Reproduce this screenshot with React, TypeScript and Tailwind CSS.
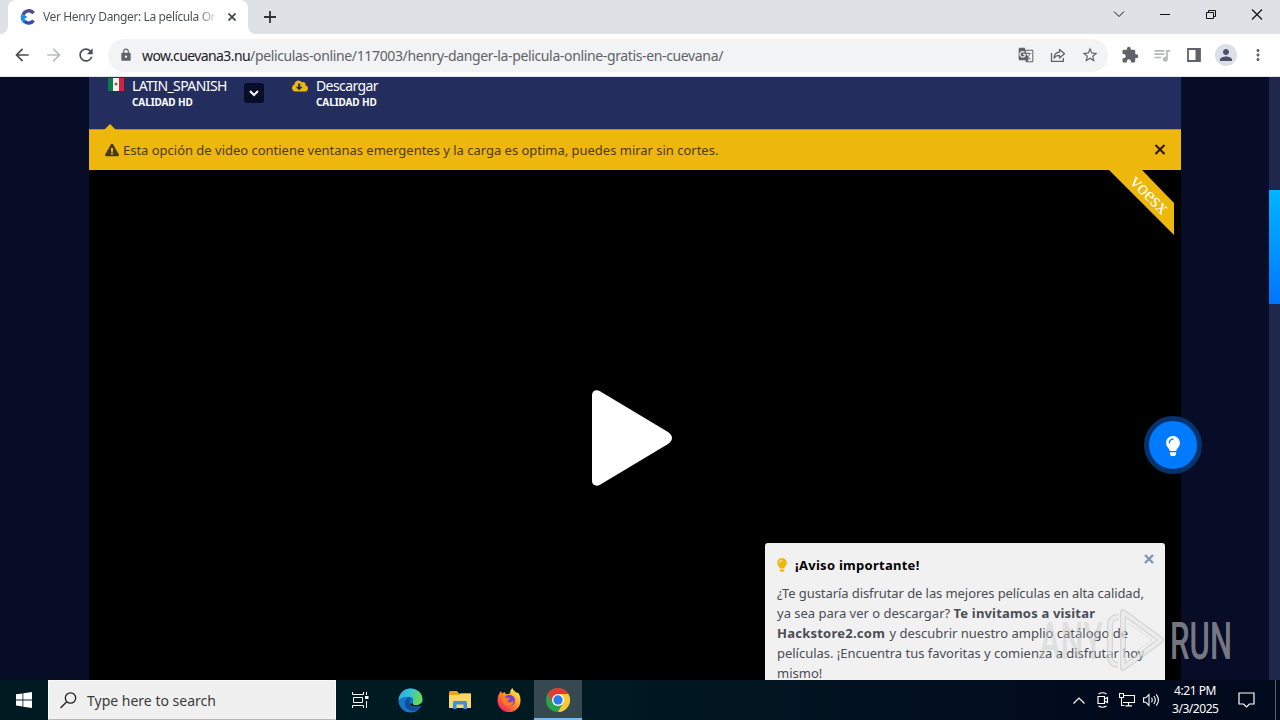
import type { ReactNode } from 'react';
import {
  FaCloudDownloadAlt,
  FaExclamationTriangle,
  FaLightbulb,
} from 'react-icons/fa';
import {
  MdArrowBack,
  MdArrowForward,
  MdExtension,
  MdGTranslate,
  MdLock,
  MdMoreVert,
  MdPerson,
  MdQueueMusic,
  MdRefresh,
  MdStarBorder,
} from 'react-icons/md';

export default function App() {
  return (
    <div className="flex h-[720px] w-[1280px] flex-col overflow-hidden bg-[#070d27] font-['Noto_Sans','Open_Sans',sans-serif]">
      <TabStrip />
      <Toolbar />
      <Page />
      <Taskbar />
    </div>
  );
}

function TabStrip() {
  return (
    <div className="flex h-[34px] shrink-0 items-stretch justify-between bg-[#dee1e6]">
      <div className="flex">
        <svg width="8" height="34" className="shrink-0">
          <path d="M8 26a8 8 0 0 1-8 8h8z" fill="#fff" />
        </svg>
        <div className="flex w-[240px] items-center rounded-t-lg bg-white pl-3 pr-2.5">
          <SiteLogo />
          <span className="ml-[7px] w-[171px] overflow-hidden whitespace-nowrap bg-linear-to-r from-[#4a4d51] from-90% to-[#4a4d51]/20 bg-clip-text text-[12px] tracking-[-0.38px] text-transparent">
            Ver Henry Danger: La película Online
          </span>
          <svg width="8" height="8" viewBox="0 0 8 8" className="ml-3.5" stroke="#3c4043" strokeWidth="1.6">
            <path d="M.5.5l7 7M7.5.5l-7 7" />
          </svg>
        </div>
        <svg width="8" height="34" className="shrink-0">
          <path d="M0 26a8 8 0 0 0 8 8H0z" fill="#fff" />
        </svg>
        <svg width="12" height="12" viewBox="0 0 12 12" className="ml-2 mt-[11px]" stroke="#303236" strokeWidth="1.8">
          <path d="M6 0v12M0 6h12" />
        </svg>
      </div>
      <svg width="170" height="28" fill="none" stroke="#111">
        <path d="M4 11.500l5 5 5-5" />
        <path d="M50 14.500h10" />
        <path d="M96.500 12.500h7v6h-7zM98.500 12.500v-2h7v6h-2" />
        <path d="M142 9.500l10 10M152 9.500l-10 10" strokeWidth="1.2" />
      </svg>
    </div>
  );
}

function SiteLogo() {
  return (
    <svg width="16" height="16" viewBox="0 0 16 16" fill="none" className="shrink-0">
      <path d="M13.500 4.200A5.800 5.800 0 0 0 3.200 6" stroke="#4a4f8c" strokeWidth="3.400" />
      <path d="M3 6a5.800 5.800 0 0 0 2 7" stroke="#1a8cf0" strokeWidth="3.400" />
      <path d="M4.500 12.300a5.800 5.800 0 0 0 9-.8" stroke="#2f4fb0" strokeWidth="3.400" />
      <path d="M4 6l3.500 2L4 10z" fill="#1a8cf0" />
    </svg>
  );
}

function Toolbar() {
  return (
    <div className="flex h-[43px] shrink-0 items-center border-b border-[#e3e5e9] bg-white pl-3 text-[#5f6368]">
      <MdArrowBack size={20} className="text-[#4a4d51]" />
      <MdArrowForward size={20} className="ml-3 text-[#babcbe]" />
      <MdRefresh size={20} className="ml-3 text-[#4a4d51]" />
      <div className="ml-3 flex h-[33px] w-[1000px] items-center rounded-full bg-[#f1f3f4] pl-[11px] pr-[9px]">
        <MdLock size={14} />
        <span className="ml-[9px] grow whitespace-nowrap text-[14px] tracking-[-0.36px]">
          <span className="tracking-[-0.59px] text-[#202124]">wow.cuevana3.nu</span>
          /peliculas-online/117003/henry-danger-la-pelicula-online-gratis-en-cuevana/
        </span>
        <MdGTranslate size={16} />
        <svg width="16" height="16" viewBox="0 0 16 16" className="ml-4" fill="none" stroke="currentColor" strokeWidth="1.300">
          <path d="M1.500 6v8.300h11.800V11" />
          <path d="M9.500 2.500v2.600C6 5.300 4.300 7.600 4 11c1.500-2 3.200-2.700 5.500-2.700V11l5-4.300z" strokeLinejoin="round" />
        </svg>
        <MdStarBorder size={18} className="ml-[15px]" />
      </div>
      <MdExtension size={18} className="ml-[13px]" />
      <MdQueueMusic size={20} className="ml-[13px] text-[#b4b6b9]" />
      <svg width="14" height="14" viewBox="0 0 14 14" className="ml-[15px]">
        <path d="M1 1h12v12H1z" fill="none" stroke="currentColor" strokeWidth="1.800" />
        <path d="M8.500 1H13v12H8.500z" fill="currentColor" />
      </svg>
      <div className="ml-3.5 flex size-[22px] items-center justify-center rounded-full bg-[#dcdfe8]">
        <MdPerson size={18} className="text-[#4b5168]" />
      </div>
      <MdMoreVert size={18} className="ml-3" />
    </div>
  );
}

function Page() {
  return (
    <main className="relative flex h-[603px] shrink-0 justify-between overflow-hidden pl-[89px]">
      <div className="flex w-[1092px] flex-col">
        <ServerTabs />
        <div className="relative flex h-[41px] shrink-0 items-center border-t border-[#b8912a] bg-[#edb70b] pl-4 pr-[15px] text-[#4e3b0a]">
          <svg width="12" height="6" className="absolute -top-1.5 left-[15px]">
            <path d="M0 6l6-6 6 6z" fill="#edb70b" />
          </svg>
          <FaExclamationTriangle size={14} className="text-[#463a1a]" />
          <span className="ml-1 mt-0.5 grow whitespace-nowrap text-[13px] tracking-[-0.015px]">
            Esta opción de video contiene ventanas emergentes y la carga es optima, puedes mirar sin cortes.
          </span>
          <svg width="12" height="12" viewBox="0 0 12 12" stroke="#2b1503" strokeWidth="2">
            <path d="M1.500 1l9 9M10.500 1l-9 9" />
          </svg>
        </div>
        <Player />
      </div>
      <div className="flex w-[11px] flex-col bg-[#1f274c] pt-[113px]">
        <div className="h-[114px] bg-linear-to-b from-[#00b4ff] to-[#0075ff]" />
      </div>

      <div className="absolute left-[1144px] top-[339px] flex size-[58px] items-center justify-center rounded-full border-5 border-[#05336d] bg-[#007bff] pt-0.5 text-white">
        <FaLightbulb size={20} />
      </div>
      <NoticePanel />
      <Watermark />
    </main>
  );
}

function ServerTabs() {
  return (
    <div className="flex h-[52px] shrink-0 bg-[#232e5e] pl-[19px] text-white">
      <svg width="16" height="13" className="mt-px">
        <path d="M0 0h5v13H0z" fill="#0c7a4f" />
        <path d="M5 0h6v13H5z" fill="#f2f2f2" />
        <path d="M11 0h5v13h-5z" fill="#d0243d" />
        <circle cx="8" cy="6" r="1.600" fill="#8b6a3a" />
      </svg>
      <ServerLabel name="LATIN_SPANISH" />
      <div className="ml-[17px] mt-1.5 flex size-5 items-center justify-center rounded-[3px] bg-[#080e28]">
        <svg width="10" height="7" viewBox="0 0 10 7" fill="none" stroke="#fff" strokeWidth="2">
          <path d="M1 1l4 4 4-4" />
        </svg>
      </div>
      <FaCloudDownloadAlt size={16} className="ml-7 mt-px text-[#edb70b]" />
      <ServerLabel name="Descargar" />
    </div>
  );
}

function ServerLabel({ name }: { name: string }) {
  return (
    <div className="ml-2 w-[95px] whitespace-nowrap">
      <p className="text-[14px] leading-[18px] tracking-[-0.6px]">{name}</p>
      <p className="text-[10px] font-bold leading-[14px] tracking-[-0.1px]">CALIDAD HD</p>
    </div>
  );
}

function Player() {
  return (
    <div className="relative flex grow justify-center bg-black pr-1.5 pt-[220px]">
      <svg width="80" height="96" viewBox="0 0 80 96">
        <path d="M0 5C0 1 4 -1 8 1.200L76 42q8 6 0 12L8 94.800C4 97 0 95 0 91z" fill="#fff" />
      </svg>
      <div className="absolute right-[7px] top-0 flex size-[65px] items-center justify-center">
        <svg width="65" height="65" className="absolute inset-0">
          <path d="M0 0h33l32 33v32z" fill="#edb70b" />
        </svg>
        <span className="relative -top-[9px] left-[9px] rotate-45 font-['Liberation_Serif',serif] text-[20px] leading-none text-white">
          voesx
        </span>
      </div>
    </div>
  );
}

function NoticePanel() {
  return (
    <aside className="absolute left-[765px] top-[466px] h-[160px] w-[400px] rounded-t-[3px] bg-[#f1f1f1] px-3 pt-3 text-[#4a4d55]">
      <div className="flex h-5 items-center">
        <FaLightbulb size={14} className="-ml-0.5 text-[#edb70b]" />
        <h2 className="ml-1.5 mt-0.5 whitespace-nowrap text-[13px] font-bold tracking-[0.27px] text-black">
          ¡Aviso importante!
        </h2>
      </div>
      <p className="mt-2 whitespace-nowrap text-[13px] leading-5">
        <span className="tracking-[-0.08px]">¿Te gustaría disfrutar de las mejores películas en alta calidad,</span>
        <br />
        ya sea para ver o descargar? <b className="tracking-[0.18px]">Te invitamos a visitar</b>
        <br />
        <b className="tracking-[0.24px]">Hackstore2.com</b> <span className="ml-px">y descubrir nuestro amplio catálogo de</span>
        <br />
        <span className="tracking-[-0.02px]">películas. ¡Encuentra tus favoritas y comienza a disfrutar hoy</span>
        <br />
        mismo!
      </p>
      <svg width="10" height="10" viewBox="0 0 10 10" className="absolute right-[11px] top-[11px]" stroke="#8095b0" strokeWidth="2.400">
        <path d="M1 1l8 8M9 1l-8 8" />
      </svg>
    </aside>
  );
}

function Watermark() {
  return (
    <svg width="204" height="70" className="absolute left-[1036px] top-[528px] font-['Roboto',sans-serif] font-medium" fill="none">
      <text x="3" y="54" fontSize="51" textLength="64" lengthAdjust="spacingAndGlyphs" fill="#c8c8c8" fillOpacity=".45">
        ANY
      </text>
      <g strokeLinejoin="round">
        <path d="M83 12q-9 0-9 8v32q0 7 8 8M87 7l38 28-38 28z" stroke="#b0b0b0" strokeOpacity=".4" strokeWidth="6" />
        <path d="M83 12q-9 0-9 8v32q0 7 8 8M87 7l38 28-38 28z" stroke="#fff" strokeOpacity=".5" strokeWidth="3.500" />
        <path d="M92 18l24 17-24 17" stroke="#c4c4c4" strokeOpacity=".4" />
      </g>
      <text x="134" y="54" fontSize="52" textLength="62" lengthAdjust="spacingAndGlyphs" fill="#85878f" fillOpacity=".9">
        RUN
      </text>
    </svg>
  );
}

function Taskbar() {
  return (
    <footer className="flex h-10 shrink-0 bg-linear-to-r from-[#001a22] from-45% to-[#020a1d] to-85% text-white">
      <div className="flex w-12 items-center justify-center">
        <svg width="16" height="16" viewBox="0 0 16 16" fill="#fff">
          <path d="M0 2.300l6.500-.9v6.100H0zM7.300 1.300L16 0v7.500H7.300zM0 8.400h6.500v6.100L0 13.600zM7.300 8.400H16V16l-8.700-1.300z" />
        </svg>
      </div>
      <div className="flex w-72 items-center border border-b-[#b8b8b8] border-[#fafafa] bg-[#f0f0f0] pl-[11px] text-[#3a3a3a]">
        <svg width="17" height="17" viewBox="0 0 17 17" fill="none" stroke="#222" strokeWidth="1.300">
          <circle cx="10.500" cy="6" r="5.200" />
          <path d="M6.700 9.700L.5 16" />
        </svg>
        <span className="ml-2.5 mt-0.5 text-[14px] leading-5">Type here to search</span>
      </div>
      <AppSlot>
        <svg width="17" height="16" viewBox="0 0 17 16" fill="none" stroke="#fff">
          <path d="M.5 0v2.500h11V0M.5 16v-2.500h11V16M1.500 5.500h9v5h-9zM14.500 0v3M14.500 9v7" />
          <path d="M13 4h3.500v3H13z" fill="#fff" stroke="none" />
        </svg>
      </AppSlot>
      <div className="w-px" />
      <AppSlot>
        <EdgeIcon />
      </AppSlot>
      <AppSlot>
        <svg width="22" height="20" viewBox="0 0 22 20">
          <path d="M0 2.500Q0 1 1.500 1H8l2 2.500h11.500V18H0z" fill="#e8a41c" />
          <path d="M0 5h10l2-1.500h10V18H0z" fill="#fcd667" />
          <path d="M4 19v-6.500q0-1.500 1.500-1.500h11q1.500 0 1.500 1.500V19h-3.500v-4.500h-7V19z" fill="#3a93d6" />
        </svg>
      </AppSlot>
      <AppSlot>
        <FirefoxIcon />
      </AppSlot>
      <div className="ml-px flex w-12 items-center justify-center border-b-2 border-[#76b9ed] bg-[#364950] pt-0.5">
        <ChromeIcon />
      </div>
      <div className="grow" />
      <Tray />
    </footer>
  );
}

function AppSlot({ children }: { children: ReactNode }) {
  return <div className="flex w-[49px] items-center justify-center">{children}</div>;
}

function EdgeIcon() {
  return (
    <svg width="25" height="25" viewBox="0 0 24 24">
      <defs>
        <linearGradient id="edgeTop" x1="0" y1="0" x2="1" y2=".3">
          <stop offset="0" stopColor="#2aa4e8" />
          <stop offset=".5" stopColor="#35c4d0" />
          <stop offset="1" stopColor="#6ad957" />
        </linearGradient>
      </defs>
      <circle cx="12" cy="12" r="11.500" fill="#1277c9" />
      <path d="M.6 12C1 5 6 .5 12 .5c7 0 11.500 5 11.500 10 0 3.500-2.500 6-6 6-3 0-4-1-3.500-2.500 1.500-2 .5-5.500-3-5.500C6 8.500 3 9 .6 12z" fill="url(#edgeTop)" />
      <path d="M10 9c-4 2-4.500 8-1 11 4 3.300 9 2 12.500-2-4.500 1.800-9.500.5-10.500-3.500-.5-2 .3-3.300 1.500-4.500-.8-.8-1.500-1-2.500-1z" fill="#124a9c" />
      <path d="M14 14c-.5 1.500.5 2.500 3.500 2.500 2.200 0 4-1 5-2.600L24 16l-3 1.500c-4 .8-8.500.3-9.500-2z" fill="#021820" />
    </svg>
  );
}

function FirefoxIcon() {
  return (
    <svg width="24" height="24" viewBox="0 0 24 24">
      <defs>
        <linearGradient id="foxBody" x1=".85" y1=".1" x2=".2" y2=".9">
          <stop offset="0" stopColor="#fff04a" />
          <stop offset=".45" stopColor="#ff9420" />
          <stop offset="1" stopColor="#f5245c" />
        </linearGradient>
      </defs>
      <path d="M2.500 5l1.500-2 1 2.500L7.500 4 9 6.200l4-.7C13 3 14 1 15.500 0c.5 2.500 3 3.500 4.500 5l1-.5c2 2.500 2.500 5.500 2.500 8A11.500 11.500 0 0 1 .5 13C.5 10 1 7.500 2.500 5z" fill="url(#foxBody)" />
      <circle cx="12.300" cy="12.500" r="5.800" fill="#7a3fe0" />
      <path d="M5 9.500c2-1 4-.5 5.500.5 1.200 0 2 .2 2.500.7-.5 1.300-2 1.300-2.800 2.200 1.500 2.300 4.800 1.500 6.500-.5.3 3-2 5.600-5 5.600-4.500 0-7-4-6.700-8.500z" fill="#ff7a28" />
    </svg>
  );
}

function ChromeIcon() {
  return (
    <svg width="24" height="24" viewBox="0 0 24 24">
      <circle cx="12" cy="12" r="12" fill="#2ba24c" />
      <path d="M1.600 6A12 12 0 0 1 22.400 6H12l-5.200 9z" fill="#e33b2e" />
      <path d="M22.400 6A12 12 0 0 1 12 24l5.200-9L12 6z" fill="#fcc934" />
      <circle cx="12" cy="12" r="6" fill="#fff" />
      <circle cx="12" cy="12" r="4.700" fill="#2a7de9" />
    </svg>
  );
}

function Tray() {
  return (
    <div className="flex items-center">
      <svg width="12" height="7" viewBox="0 0 12 7" fill="none" stroke="#fff" strokeWidth="1.200">
        <path d="M.5 6.500L6 1l5.500 5.500" />
      </svg>
      <svg width="12" height="16" viewBox="0 0 12 16" className="ml-3" fill="none" stroke="#fff" strokeWidth="1.200">
        <path d="M1 4.500h6.500v7H1zM7.500 7l3-1.500v5l-3-1.500M1.500 2Q5.500-.5 9.500 2M1.500 14Q5.500 16.500 9.500 14" />
      </svg>
      <svg width="16" height="14" viewBox="0 0 16 14" className="ml-2.5" fill="none" stroke="#fff" strokeWidth="1.100">
        <path d="M5 2.500h10.500v7H4M.5.500h4v4h-4zM2.500 4.500v8h3M9.500 9.500v3M6.500 12.900h6.500" />
      </svg>
      <svg width="17" height="14" viewBox="0 0 17 14" className="ml-2" fill="none" stroke="#fff" strokeWidth="1.100">
        <path d="M.6 4.800h2.200L6 1.500v11L2.800 9.200H.6zM8.500 4.800q1.500 2.200 0 4.400M10.800 3q3 4 0 8M13.200 1.300q4.500 5.700 0 11.400" />
      </svg>
      <div className="ml-3 w-[46px] whitespace-nowrap text-center text-[12px] leading-[18px] tracking-[-0.45px]">
        <p>4:21 PM</p>
        <p>3/3/2025</p>
      </div>
      <svg width="17" height="16" viewBox="0 0 17 16" className="ml-5" fill="none" stroke="#fff" strokeWidth="1.200">
        <path d="M1 1h15v11h-4.500l-3 3-3-3H1z" />
      </svg>
      <div className="ml-5 mr-1 h-10 w-px bg-[#56606b]" />
    </div>
  );
}
